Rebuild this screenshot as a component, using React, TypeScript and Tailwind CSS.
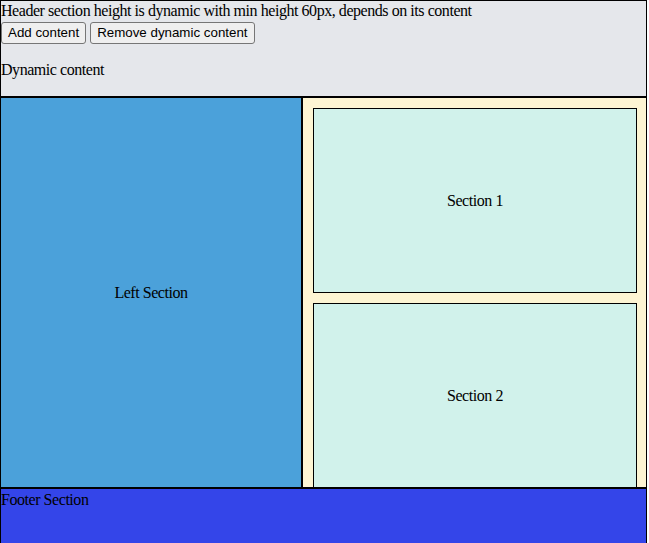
const HeaderButton = ({ label }: { label: string }) => (
  <button className="h-[22px] rounded-[3px] border border-[#767676] bg-[#efefef] px-[6px] [font-family:'Liberation_Sans',Arial,sans-serif] text-[13.33px] leading-none tracking-normal text-black">
    {label}
  </button>
);

const RightBox = ({ title }: { title: string }) => (
  <div className="flex h-[185px] shrink-0 items-center justify-center border border-black bg-[#d1f2eb] pt-[2px]">
    {title}
  </div>
);

export default function App() {
  return (
    <div className="w-[647px] [font-family:'Liberation_Serif',serif] text-[16px] leading-[1.15] tracking-[-0.45px] text-black">
      <header className="min-h-[60px] border border-black bg-[#e5e7eb]">
        <div className="pt-[0.5px]">Header section height is dynamic with min height 60px, depends on its content</div>
        <div className="flex gap-[4px] pt-[2px]">
          <HeaderButton label="Add content" />
          <HeaderButton label="Remove dynamic content" />
        </div>
        <p className="mt-[17px] mb-[16.6px]">Dynamic content</p>
      </header>

      <main className="flex h-[391px] border border-black">
        <div className="flex w-[301px] shrink-0 items-center justify-center border-r border-black bg-[#4ba1da] pt-[2px]">
          Left Section
        </div>
        <div className="flex flex-1 flex-col gap-[10px] border-l border-black bg-[#fdf5d3] pt-[10px] pl-[10px] pr-[9px]">
          <RightBox title="Section 1" />
          <RightBox title="Section 2" />
        </div>
      </main>

      <footer className="h-[60px] border border-black bg-[#3445e9] pt-[2px]">Footer Section</footer>
    </div>
  );
}
